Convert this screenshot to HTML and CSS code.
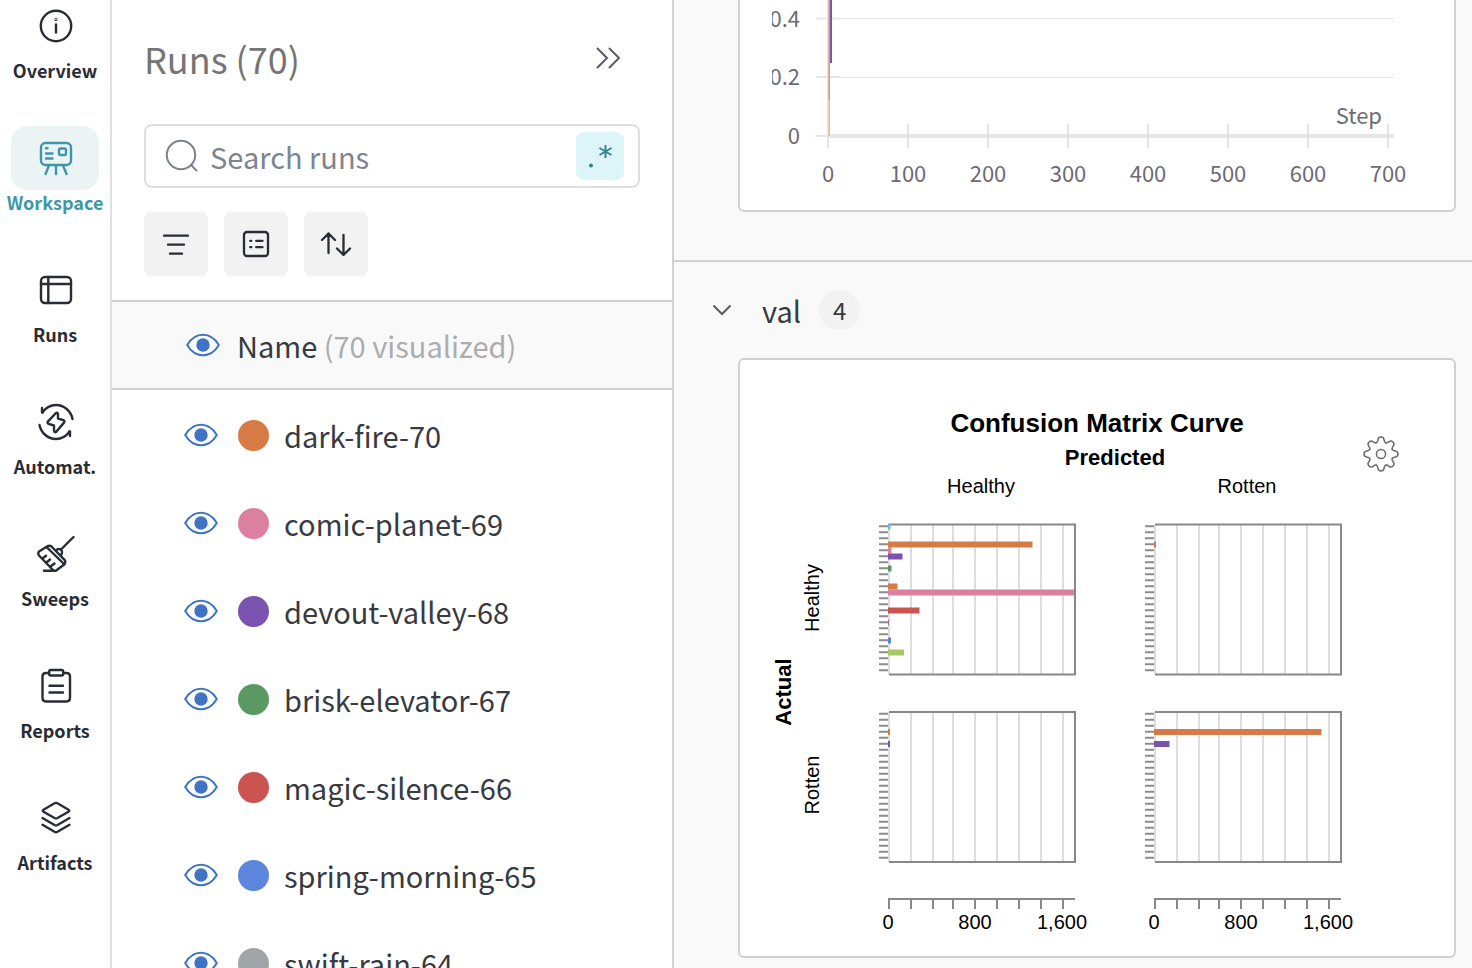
FILE: index.html
```html
<!DOCTYPE html>
<html lang="en">
<head>
<meta charset="utf-8">
<title>Workspace – Runs</title>
<link rel="stylesheet" href="styles.css">
</head>
<body>
<svg class="defs" aria-hidden="true">
  <defs>
    <symbol id="eye" viewBox="0 0 34 24">
      <path d="M1.2 12C5 5.500 10.500 1.800 17 1.800S29 5.500 32.800 12C29 18.500 23.500 22.200 17 22.200S5 18.500 1.200 12Z" fill="#fff" stroke="#3f74c4" stroke-width="2"/>
      <circle cx="17" cy="12" r="6.700" fill="#3f74c4"/>
    </symbol>
    <path id="tooth" d="M-4.700 -11.200C-3.400 -11.600 -3.200 -13 -3 -14.400C-2.500 -17.800 2.500 -17.800 3 -14.400C3.200 -13 3.400 -11.600 4.700 -11.200"/>
    <g id="cell">
      <path class="grid" d="M0 0V150M22 0V150M44 0V150M64 0V150M86 0V150M108 0V150M130 0V150M152 0V150M174 0V150"/>
      <path class="axis" d="M0 0H186V150H0"/>
      <path class="ticks" d="M-5.500 0.800V149"/>
    </g>
    <path id="scale" class="axis" d="M0 10V0H186M22 0V10M44 0V10M64 0V10M86 0V10M108 0V10M130 0V10M152 0V10M174 0V10"/>
  </defs>
</svg>
<div class="app">
  <nav class="sidebar" aria-label="Project">
    <a class="nav-item" href="#overview">
      <span class="nav-icon"><svg viewBox="0 0 40 40"><circle cx="21" cy="20" r="15.200"/><path d="M21 18.500V26.500"/><circle cx="21" cy="13.500" r=".4"/></svg></span>
      <span class="nav-label">Overview</span>
    </a>
    <a class="nav-item active" href="#workspace" aria-current="page">
      <span class="nav-icon"><svg viewBox="0 0 40 40"><rect x="6" y="5" width="30" height="22" rx="4.500"/><path d="M11 10.200H12.500M11 15.500H17.500M11 20.500H17.500M14 27.500L10.500 36M21 27.500V36M28 27.500L31.500 36"/><rect x="24" y="10.500" width="7" height="6.500" rx="1.500"/></svg></span>
      <span class="nav-label">Workspace</span>
    </a>
    <a class="nav-item" href="#runs">
      <span class="nav-icon"><svg viewBox="0 0 40 40"><rect x="6" y="7" width="30" height="26" rx="4"/><path d="M6 14H36M13.300 7V33"/></svg></span>
      <span class="nav-label">Runs</span>
    </a>
    <a class="nav-item" href="#automations">
      <span class="nav-icon"><svg viewBox="0 0 40 40"><path d="M7 6V10.500H8M7.500 10.200C11 5.500 16 3 21 3C29 3 36 9 37.500 17M35 34V29.500H34M34.500 29.800C31 34.500 26 37 21 37C13 37 6 31 4.500 23"/><path d="M20.500 11.500L12.800 19.600Q12 21.200 13.600 21.800L19 23.500V28.500Q19.500 31.300 21.500 29.500L29.200 20.400Q30 18.900 28.400 18.200L23 16.500V12Q22.500 9.800 20.500 11.500Z"/></svg></span>
      <span class="nav-label">Automat.</span>
    </a>
    <a class="nav-item" href="#sweeps">
      <span class="nav-icon"><svg viewBox="0 0 40 40"><path d="M26 15.500L38.500 3M4 17.500Q2.500 19.500 4 21.500L17 35Q19 37.500 21.500 36.300L28.500 31Q31.500 28 29.500 25.800L16.500 12.500Q14.500 11 12 12.500L4 17.500ZM11.500 13L29.500 30.500M9 36.800H20.500M7.500 24.500L11 21.800M11.500 28.500L15 25.500M15.500 32.500L19.500 29.500"/><path d="M21.500 16C23.500 14 26.500 15 27 17.500Q27.300 19.500 26 21"/></svg></span>
      <span class="nav-label">Sweeps</span>
    </a>
    <a class="nav-item" href="#reports">
      <span class="nav-icon"><svg viewBox="0 0 40 40"><path d="M14 7H11Q7.500 7 7.500 10.500V31.500Q7.500 35.500 11 35.500H31.500Q35 35.500 35 31.500V10.500Q35 7 31.500 7H28.500"/><rect x="14.200" y="4" width="14" height="5.500" rx="1.500"/><path d="M14.500 19.700H28M14.500 26.500H28"/></svg></span>
      <span class="nav-label">Reports</span>
    </a>
    <a class="nav-item" href="#artifacts">
      <span class="nav-icon"><svg viewBox="0 0 40 40"><path d="M19.500 5.300Q21 4.500 22.500 5.300L33.500 11.700Q35 12.700 33.500 13.700L22.500 20Q21 20.800 19.500 20L8.500 13.700Q7 12.700 8.500 11.700ZM7.500 20L19.500 27Q21 27.800 22.500 27L34.500 20M7.500 26.800L19.500 33.800Q21 34.600 22.500 33.800L34.500 26.800"/></svg></span>
      <span class="nav-label">Artifacts</span>
    </a>
  </nav>

  <section class="runs">
    <div class="runs-top">
      <header class="runs-title">
        <h1>Runs (70)</h1>
        <button class="plain" type="button" aria-label="Expand table"><svg width="32" height="32" viewBox="0 0 32 32"><path d="M5.500 6.500L15 16L5.500 25.500M17.500 6.500L27 16L17.500 25.500"/></svg></button>
      </header>
      <div class="search">
        <svg width="36" height="36" viewBox="0 0 36 36"><circle cx="17" cy="17" r="14.200"/><path d="M27 27L32.500 32.500"/></svg>
        <input type="text" placeholder="Search runs" aria-label="Search runs">
        <button class="regex" type="button" aria-label="Use regular expressions"><svg width="48" height="48" viewBox="0 0 48 48"><circle cx="15" cy="33.500" r="2"/><path d="M29.500 13V26M23.500 16L35.500 23M35.500 16L23.500 23"/></svg></button>
      </div>
      <div class="tools">
        <button type="button" aria-label="Filter"><svg width="32" height="32" viewBox="0 0 32 32"><path d="M4 7.700H28M8 16.700H24M10 25.700H22"/></svg></button>
        <button type="button" aria-label="Group"><svg width="32" height="32" viewBox="0 0 32 32"><rect x="4" y="4" width="24" height="24" rx="3"/><path d="M10.200 12.800H11.300M16.200 12.800H22.500M10.200 19.200H11.300M16.200 19.200H22.500"/></svg></button>
        <button type="button" aria-label="Sort"><svg width="32" height="32" viewBox="0 0 32 32"><path d="M8.500 5.500V25M2 12L8.500 5.500L15 12M23.500 7V27M17 20.500L23.500 27L30 20.500"/></svg></button>
      </div>
    </div>
    <div class="list-head">
      <button class="plain" type="button" aria-label="Toggle all runs"><svg class="eye"><use href="#eye"/></svg></button>
      <span>Name <span class="muted">(70 visualized)</span></span>
    </div>
    <ul class="list">
      <li><button class="plain" type="button" aria-label="Toggle dark-fire-70"><svg class="eye"><use href="#eye"/></svg></button><span class="dot orange"></span><a href="#dark-fire-70">dark-fire-70</a></li>
      <li><button class="plain" type="button" aria-label="Toggle comic-planet-69"><svg class="eye"><use href="#eye"/></svg></button><span class="dot pink"></span><a href="#comic-planet-69">comic-planet-69</a></li>
      <li><button class="plain" type="button" aria-label="Toggle devout-valley-68"><svg class="eye"><use href="#eye"/></svg></button><span class="dot purple"></span><a href="#devout-valley-68">devout-valley-68</a></li>
      <li><button class="plain" type="button" aria-label="Toggle brisk-elevator-67"><svg class="eye"><use href="#eye"/></svg></button><span class="dot green"></span><a href="#brisk-elevator-67">brisk-elevator-67</a></li>
      <li><button class="plain" type="button" aria-label="Toggle magic-silence-66"><svg class="eye"><use href="#eye"/></svg></button><span class="dot red"></span><a href="#magic-silence-66">magic-silence-66</a></li>
      <li><button class="plain" type="button" aria-label="Toggle spring-morning-65"><svg class="eye"><use href="#eye"/></svg></button><span class="dot blue"></span><a href="#spring-morning-65">spring-morning-65</a></li>
      <li><button class="plain" type="button" aria-label="Toggle swift-rain-64"><svg class="eye"><use href="#eye"/></svg></button><span class="dot gray"></span><a href="#swift-rain-64">swift-rain-64</a></li>
    </ul>
  </section>

  <main class="board">
    <section class="section">
      <div class="card card-cut">
        <svg class="chart line-chart" viewBox="740 0 714 210" role="img" aria-label="Metric by step">
          <clipPath id="labels"><rect x="772" y="0" width="60" height="210"/></clipPath>
          <path class="rule" d="M828 18.500H1394M828 77.500H1394" stroke-width="1"/>
          <path class="rule" d="M816 18.500H840M816 77H840M816 136H828M828 0V148M908 124V148M988 124V148M1068 124V148M1148 124V148M1228 124V148M1308 124V148M1388 124V148" stroke-width="2"/>
          <path class="rule" d="M828 136H1394" stroke-width="4"/>
          <path d="M829.200 0V100" stroke="#dd9069" stroke-width="1.500"/>
          <path d="M829.200 100V136" stroke="#f3b388" stroke-width="1.500"/>
          <path d="M831 0V63" stroke="#7d54b2" stroke-width="2"/>
          <g class="end" clip-path="url(#labels)"><text x="800" y="27">0.4</text><text x="800" y="85">0.2</text><text x="800" y="144">0</text></g>
          <text class="end" x="1382" y="124">Step</text>
          <g class="mid"><text x="828" y="182">0</text><text x="908" y="182">100</text><text x="988" y="182">200</text><text x="1068" y="182">300</text><text x="1148" y="182">400</text><text x="1228" y="182">500</text><text x="1308" y="182">600</text><text x="1388" y="182">700</text></g>
        </svg>
      </div>
    </section>
    <section class="section">
      <header class="section-head">
        <button class="plain" type="button" aria-label="Collapse section"><svg width="24" height="24" viewBox="0 0 24 24"><path d="M3.500 7.500L12 16L20.500 7.500"/></svg></button>
        <h2>val</h2>
        <span class="count">4</span>
      </header>
      <div class="card">
        <button class="plain gear" type="button" aria-label="Edit panel"><svg width="40" height="40" viewBox="-20 -20 40 40"><circle r="4.600"/><use href="#tooth"/><use href="#tooth" transform="rotate(45)"/><use href="#tooth" transform="rotate(90)"/><use href="#tooth" transform="rotate(135)"/><use href="#tooth" transform="rotate(180)"/><use href="#tooth" transform="rotate(225)"/><use href="#tooth" transform="rotate(270)"/><use href="#tooth" transform="rotate(315)"/></svg></button>
        <svg class="chart matrix mid" viewBox="740 360 714 596" role="img" aria-label="Confusion Matrix Curve">
          <text class="title" x="1097" y="432">Confusion Matrix Curve</text>
          <text class="subtitle" x="1115" y="465">Predicted</text>
          <text x="981" y="493">Healthy</text>
          <text x="1247" y="493">Rotten</text>
          <text class="subtitle" transform="translate(791 692) rotate(-90)">Actual</text>
          <text transform="translate(819 598) rotate(-90)">Healthy</text>
          <text transform="translate(819 785) rotate(-90)">Rotten</text>
          <use href="#cell" x="889" y="524.500"/>
          <use href="#cell" x="1155" y="524.500"/>
          <use href="#cell" x="889" y="712"/>
          <use href="#cell" x="1155" y="712"/>
          <g stroke-width="6">
            <path stroke="#6dbfd8" d="M888 526.500H890.500"/>
            <path stroke="#d67b45" d="M888 544.500H1032.500M888 586.500H897.500M888 731.900H890M1154 731.900H1321.500M1154 544.500H1156"/>
            <path stroke="#dc809f" d="M888 550.500H891.500M888 592.500H1074"/>
            <path stroke="#7953af" d="M888 556.500H902.500M888 743.900H890M1154 743.900H1169.500"/>
            <path stroke="#5a9a62" d="M888 568.500H891.500"/>
            <path stroke="#cb5450" d="M888 610.500H919.500"/>
            <path stroke="#b6668f" d="M888 622.500H889"/>
            <path stroke="#5c86dc" d="M888 640.500H891"/>
            <path stroke="#a5c864" d="M888 652.500H904"/>
          </g>
          <use href="#scale" x="889" y="899"/>
          <use href="#scale" x="1155" y="899"/>
          <text x="888" y="929">0</text><text x="975" y="929">800</text><text x="1062" y="929">1,600</text>
          <text x="1154" y="929">0</text><text x="1241" y="929">800</text><text x="1328" y="929">1,600</text>
        </svg>
      </div>
    </section>
  </main>
</div>
</body>
</html>
```

FILE: styles.css
```css
* { box-sizing: border-box; }

body {
  margin: 0;
  overflow: hidden;
  background: #fff;
  color: #373a3f;
  font-family: "Noto Sans CJK SC", "Noto Sans", sans-serif;
  font-size: 29px;
  line-height: 42px;
}

h1, h2, ul { margin: 0; padding: 0; font-weight: 400; }
a { color: inherit; text-decoration: none; }
button { padding: 0; border: 0; font: inherit; cursor: pointer; }
svg { display: block; fill: none; }
.defs { position: absolute; width: 0; height: 0; }
.plain { flex: none; background: none; }

.app { display: flex; height: 100vh; }

.sidebar {
  display: flex;
  flex-direction: column;
  gap: 44px;
  flex: none;
  width: 112px;
  margin-top: -6px;
  border-right: 2px solid #e0e0e0;
  color: #282c34;
}
.nav-item { display: flex; flex-direction: column; align-items: center; }
.nav-icon {
  display: flex;
  align-items: center;
  justify-content: center;
  width: 88px;
  height: 64px;
  border-radius: 16px;
}
.nav-icon svg {
  width: 40px;
  height: 40px;
  stroke: currentColor;
  stroke-width: 2.4;
  stroke-linecap: round;
  stroke-linejoin: round;
}
.nav-label { font-size: 18px; font-weight: 700; line-height: 24px; }
.active { color: #3d97a9; }
.active .nav-icon { background: #ebf3f5; }

.runs {
  flex: none;
  width: 562px;
  overflow: hidden;
  border-right: 2px solid #d1d1d1;
}
.runs-top {
  display: flex;
  flex-direction: column;
  gap: 24px;
  padding: 32px 32px 24px;
}
.runs-title {
  display: flex;
  align-items: center;
  justify-content: space-between;
  height: 52px;
  margin-bottom: 16px;
  padding-right: 16px;
  color: #757575;
}
h1 { font-size: 36px; line-height: 52px; }
.runs-title svg { stroke: #565c68; stroke-width: 2; stroke-linecap: round; }

.search {
  display: flex;
  align-items: center;
  gap: 10px;
  height: 64px;
  padding: 0 14px 0 18px;
  border: 2px solid #dedede;
  border-radius: 8px;
}
.search > svg { flex: none; stroke: #7b8290; stroke-width: 2; stroke-linecap: round; }
.search input {
  flex: 1;
  min-width: 0;
  padding: 0;
  border: 0;
  outline: 0;
  background: none;
  font: inherit;
}
.search input::placeholder { color: #7d8491; }
.regex { flex: none; border-radius: 8px; background: #ddf4f8; }
.regex circle { fill: #388295; }
.regex path { stroke: #388295; stroke-width: 2; }

.tools { display: flex; gap: 16px; }
.tools button {
  display: grid;
  place-items: center;
  width: 64px;
  height: 64px;
  border-radius: 8px;
  background: #f2f2f2;
}
.tools svg { stroke: #282c34; stroke-width: 2.3; stroke-linecap: round; stroke-linejoin: round; }

.list-head {
  display: flex;
  align-items: center;
  gap: 17px;
  height: 90px;
  padding: 0 0 1px 74px;
  border: solid #d1d1d1;
  border-width: 2px 0;
  background: #f9f9f9;
}
.muted { color: #adadad; }
.eye { width: 34px; height: 24px; }
.list { padding-top: 1px; list-style: none; }
.list li { display: flex; align-items: center; height: 88px; padding-left: 72px; }
.dot { width: 31px; height: 31px; margin: 0 15px 0 20px; border-radius: 50%; }
.orange { background: #d67b45; }
.pink { background: #dc809f; }
.purple { background: #7953af; }
.green { background: #5a9a62; }
.red { background: #cb5450; }
.blue { background: #5c86dc; }
.gray { background: #a0a5a8; }

.board { flex: 1; min-width: 0; overflow: hidden; background: #f9f9f9; }
.section { padding: 0 16px 0 64px; }
.section + .section { margin-top: 48px; border-top: 2px solid #d1d1d1; }
.section-head { display: flex; align-items: center; height: 96px; margin-left: -28px; }
.section-head svg { stroke: #565c68; stroke-width: 2; }
h2 { margin: 0 18px 0 28px; font-size: 29px; line-height: 42px; }
.count {
  min-width: 41px;
  border-radius: 20px;
  background: #f2f2f2;
  font-size: 24px;
  line-height: 40px;
  text-align: center;
}

.card {
  position: relative;
  border: 2px solid #d1d1d1;
  border-radius: 6px;
  background: #fff;
}
.card-cut { border-top: 0; border-radius: 0 0 6px 6px; }
.chart { width: 100%; height: auto; }
.line-chart text { fill: #6b6b76; font-size: 22px; }
.rule { stroke: #e5e5e7; }
.end { text-anchor: end; }
.mid { text-anchor: middle; }
.matrix text { fill: #000; font-family: "Liberation Sans", Arial, sans-serif; font-size: 20px; }
.matrix .title { font-size: 26px; font-weight: 700; }
.matrix .subtitle { font-size: 22px; font-weight: 700; }
.grid { stroke: #ddd; stroke-width: 2; }
.axis { stroke: #888; stroke-width: 2; }
.ticks { stroke: #8c8c8c; stroke-width: 9; stroke-dasharray: 2 4; }
.gear { position: absolute; top: 74px; right: 53px; }
.gear svg { stroke: #6b6b6b; stroke-width: 1.5; stroke-linecap: round; }
```
